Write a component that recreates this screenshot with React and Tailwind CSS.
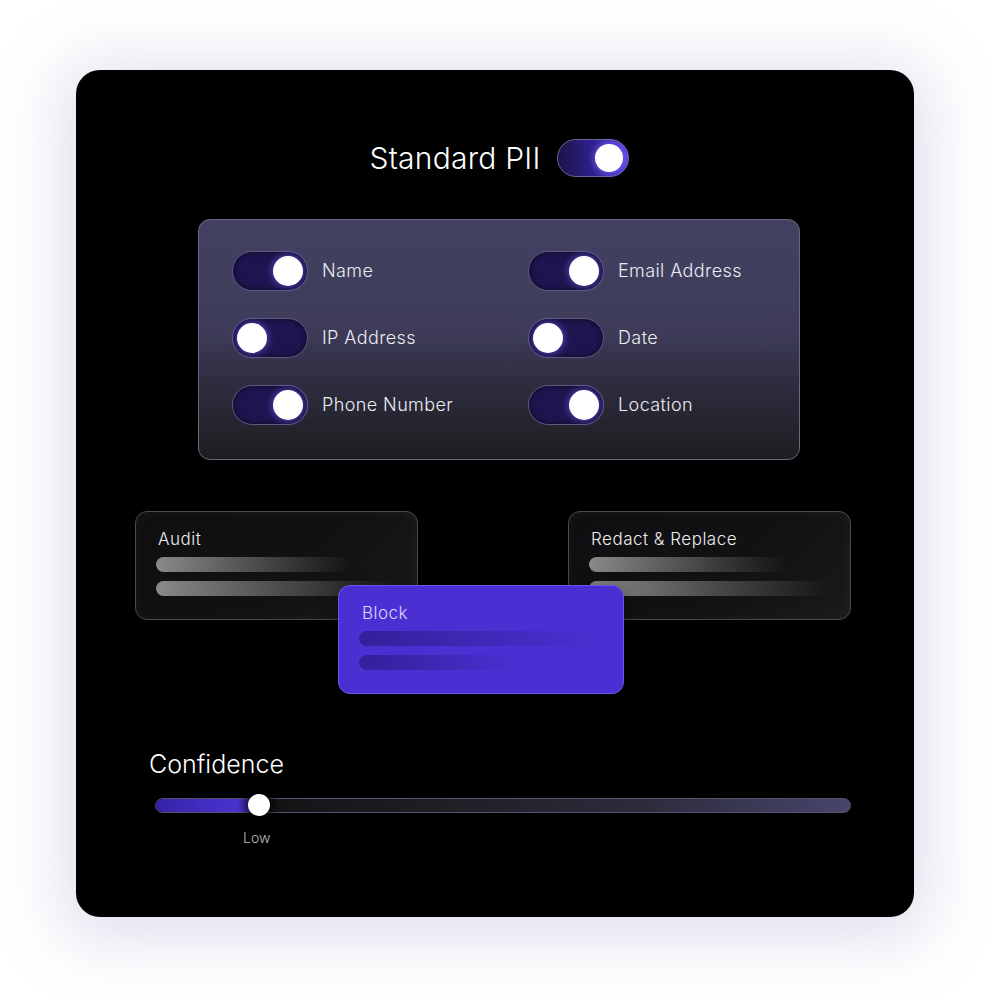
const font = { fontFamily: "Inter, 'Noto Sans', sans-serif" };

const fields = [
  { label: "Name", on: true },
  { label: "Email Address", on: true },
  { label: "IP Address", on: false },
  { label: "Date", on: false },
  { label: "Phone Number", on: true },
  { label: "Location", on: true },
];

const Toggle = ({ on }) => (
  <div
    className={`flex items-center w-[76px] h-[40px] rounded-full bg-[#1e1550] border border-[#5d5a80] px-[4px] shadow-[inset_0_0_6px_rgba(0,0,0,0.6)] ${
      on ? "justify-end" : "justify-start"
    }`}
  >
    <div className="w-[30px] h-[30px] rounded-full bg-white shadow-[0_0_6px_2px_rgba(120,100,255,0.45)]" />
  </div>
);

const Bar = ({ w, from, to }) => (
  <div
    className={`h-[15px] rounded-full ${w} bg-gradient-to-r ${from} ${to}`}
  />
);

const ModeCard = ({ title, bars }) => (
  <div className="w-[283px] h-[109px] rounded-[12px] border border-[#4a4a50] bg-[linear-gradient(135deg,#0f0f12_0%,#121215_60%,#1a1a1d_100%)] pt-[16px] px-[20px] shadow-[inset_0_0_14px_rgba(255,255,255,0.04)]">
    <div className="text-[17px] leading-[23px] font-light tracking-[0.5px] text-[#ededed] pl-[2px]">{title}</div>
    <div className="flex flex-col gap-[9px] mt-[6px]">{bars}</div>
  </div>
);

export default function App() {
  return (
    <div style={font} className="w-[990px] h-[999px] bg-white pt-[70px] pl-[76px]">
      <div className="w-[838px] h-[847px] rounded-[24px] bg-black shadow-[0_8px_60px_18px_rgba(185,185,220,0.42)] pt-[69px] pl-[59px] pr-[63px]">
        {/* header */}
        <div className="flex items-center justify-center gap-[16px] pl-[12px]">
          <span className="text-[30px] leading-[38px] font-light tracking-[0.25px] text-white">
            Standard PII
          </span>
          <div className="flex items-center justify-end w-[72px] h-[38px] rounded-full border border-[#6b66a0] bg-gradient-to-r from-[#1c1448] via-[#2e2090] to-[#5540e6] px-[5px]">
            <div className="w-[28px] h-[28px] rounded-full bg-white shadow-[0_0_6px_2px_rgba(140,120,255,0.5)]" />
          </div>
        </div>

        {/* fields panel */}
        <div className="ml-[63px] mt-[42px] w-[602px] h-[241px] rounded-[12px] border border-[#6a6880] bg-[linear-gradient(180deg,#434161_0%,#3e3c5a_45%,#2a2938_75%,#1e1e21_100%)] pt-[31px] pl-[33px]">
          <div className="grid grid-cols-[296px_1fr] gap-y-[27px]">
            {fields.map((f) => (
              <div key={f.label} className="flex items-center gap-[14px]">
                <Toggle on={f.on} />
                <span className="text-[18px] font-light tracking-[0.4px] text-[#ececf2] -mt-[2px]">{f.label}</span>
              </div>
            ))}
          </div>
        </div>

        {/* modes */}
        <div className="relative mt-[51px] h-[183px]">
          <div className="flex justify-between">
            <ModeCard
              title="Audit"
              bars={
                <>
                  <Bar w="w-[195px]" from="from-[#8a8a8a]" to="to-transparent" />
                  <Bar w="w-[240px]" from="from-[#8a8a8a]" to="to-transparent" />
                </>
              }
            />
            <ModeCard
              title="Redact & Replace"
              bars={
                <>
                  <Bar w="w-[197px]" from="from-[#8a8a8a]" to="to-transparent" />
                  <Bar w="w-[237px]" from="from-[#8a8a8a]" to="to-transparent" />
                </>
              }
            />
          </div>
          <div className="absolute left-[203px] top-[74px] w-[286px] h-[109px] rounded-[12px] border border-[#6a58e8] bg-[#4b2fd2] pt-[16px] px-[20px] shadow-[0_6px_20px_rgba(0,0,0,0.5)]">
            <div className="text-[17px] leading-[23px] font-light tracking-[0.5px] text-[#ddd6ff] pl-[3px]">Block</div>
            <div className="flex flex-col gap-[9px] mt-[6px]">
              <Bar w="w-[236px]" from="from-[#33209a]" to="to-transparent" />
              <Bar w="w-[160px]" from="from-[#33209a]" to="to-transparent" />
            </div>
          </div>
        </div>

        {/* confidence */}
        <div className="mt-[55px] pl-[14px]">
          <div className="text-[25px] leading-[30px] font-light text-white">Confidence</div>
        </div>
        <div className="relative mt-[19px] ml-[20px] w-[696px] h-[15px] rounded-full border border-[#55546a] bg-[linear-gradient(90deg,#0c0c0e_0%,#1c1c20_35%,#2c2b3c_70%,#47456b_100%)]">
          <div className="absolute left-0 top-0 h-full w-[104px] rounded-full bg-gradient-to-r from-[#3523a8] to-[#5038dc]" />
          <div className="absolute left-[92px] top-[-5px] w-[22px] h-[22px] rounded-full bg-white shadow-[0_0_10px_4px_rgba(0,0,0,0.8)]" />
        </div>
        <div className="ml-[108px] mt-[14px] text-[14px] font-light text-[#bdbdbd]">Low</div>
      </div>
    </div>
  );
}
